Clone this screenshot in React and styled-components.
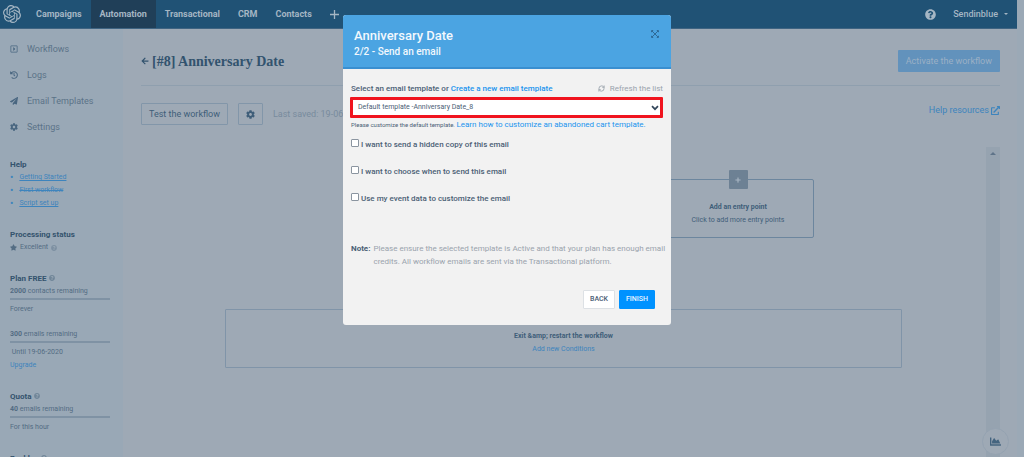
import styled, { createGlobalStyle } from "styled-components";
import {
  FaArrowLeft,
  FaChartArea,
  FaCog,
  FaExternalLinkAlt,
  FaHistory,
  FaPaperPlane,
  FaPlus,
  FaQuestionCircle,
  FaRegCaretSquareRight,
  FaStar,
} from "react-icons/fa";
import { LuRefreshCw } from "react-icons/lu";
import { SiOpenai } from "react-icons/si";

const options = [
  "I want to send a hidden copy of this email",
  "I want to choose when to send this email",
  "Use my event data to customize the email",
];

function Sidebar() {
  return (
    <Side>
      <SideLink href="#workflows">
        <FaRegCaretSquareRight />
        Workflows
      </SideLink>
      <SideLink href="#logs">
        <FaHistory />
        Logs
      </SideLink>
      <SideLink href="#templates">
        <FaPaperPlane />
        Email Templates
      </SideLink>
      <SideLink href="#settings">
        <FaCog />
        Settings
      </SideLink>

      <Section>
        <h2>Help</h2>
        <ul>
          <li>
            <HelpLink href="#start">Getting Started</HelpLink>
          </li>
          <li>
            <HelpLink href="#first" $done>
              First workflow
            </HelpLink>
          </li>
          <li>
            <HelpLink href="#script">Script set up</HelpLink>
          </li>
        </ul>
      </Section>
      <Section>
        <h2>Processing status</h2>
        <Status>
          <FaStar size={7} />
          Excellent <FaQuestionCircle size={6} opacity={0.4} />
        </Status>
      </Section>
      <Section>
        <h2>
          Plan FREE <FaQuestionCircle size={6} opacity={0.4} />
        </h2>
        <Usage>
          <b>2000</b> contacts remaining
        </Usage>
        <p>Forever</p>
        <Gap />
        <Usage>
          <b>300</b> emails remaining
        </Usage>
        <p>&nbsp;Until 19-06-2020</p>
        <a href="#upgrade">Upgrade</a>
      </Section>
      <Section>
        <h2>
          Quota <FaQuestionCircle size={6} opacity={0.4} />
        </h2>
        <Usage>
          <b>40</b> emails remaining
        </Usage>
        <p>For this hour</p>
      </Section>
      <Section>
        <h2>
          Backlog <FaQuestionCircle size={6} opacity={0.4} />
        </h2>
      </Section>
    </Side>
  );
}

function EmailModal() {
  return (
    <Overlay>
      <Modal role="dialog" aria-label="Anniversary Date">
        <ModalHeader>
          <div>
            <h2>Anniversary Date</h2>
            <p>2/2 - Send an email</p>
          </div>
          <CloseButton aria-label="Close">
            <svg width="8" height="8" viewBox="0 0 8 8" fill="none" stroke="currentColor">
              <path d="M1 1l6 6M7 1L1 7M.5 2.2V.5h1.7M5.8.5h1.7v1.7M7.5 5.8v1.7H5.8M2.2 7.5H.5V5.8" />
            </svg>
          </CloseButton>
        </ModalHeader>
        <ModalBody>
          <LabelRow>
            <label htmlFor="template">
              Select an email template or <a href="#new">Create a new email template</a>
            </label>
            <RefreshButton>
              <LuRefreshCw size={7} strokeWidth={3} />
              Refresh the list
            </RefreshButton>
          </LabelRow>
          <SelectBox>
            <select id="template">
              <option>Default template -Anniversary Date_8</option>
            </select>
            <svg width="8" height="6" viewBox="0 0 8 6" fill="none" stroke="#33475b" strokeWidth="1.7">
              <path d="M1 1.2l3 3 3-3" />
            </svg>
          </SelectBox>
          <Hint>
            Please customize the default template.{" "}
            <a href="#learn">Learn how to customize an abandoned cart template.</a>
          </Hint>
          <Options>
            {options.map((text) => (
              <label key={text}>
                <input type="checkbox" />
                {text}
              </label>
            ))}
          </Options>
          <Note>
            <b>Note:</b>
            <p>
              Please ensure the selected template is Active and that your plan has enough email
              credits. All workflow emails are sent via the Transactional platform.
            </p>
          </Note>
          <Actions>
            <ActionButton>BACK</ActionButton>
            <ActionButton $primary>FINISH</ActionButton>
          </Actions>
        </ModalBody>
      </Modal>
    </Overlay>
  );
}

export default function App() {
  return (
    <>
      <GlobalStyle />
      <Page>
        <Nav>
          <Brand href="#home" aria-label="Home">
            <SiOpenai size={18} />
          </Brand>
          <NavLink href="#campaigns">Campaigns</NavLink>
          <NavLink href="#automation" $active>
            Automation
          </NavLink>
          <NavLink href="#transactional">Transactional</NavLink>
          <NavLink href="#crm">CRM</NavLink>
          <NavLink href="#contacts">Contacts</NavLink>
          <NavLink href="#more" aria-label="More">
            <svg width="9" height="9" viewBox="0 0 9 9" stroke="currentColor" strokeWidth="1.3">
              <path d="M4.5 0v9M0 4.5h9" />
            </svg>
          </NavLink>
          <Account>
            <FaQuestionCircle size={11} />
            <AccountButton>
              Sendinblue
              <svg width="4" height="2" viewBox="0 0 4 2" fill="currentColor">
                <path d="M0 0h4L2 2z" />
              </svg>
            </AccountButton>
          </Account>
        </Nav>
        <Content>
          <Sidebar />
          <Main>
            <TitleRow>
              <h1>
                <FaArrowLeft size={8} />
                [#8] Anniversary Date
              </h1>
              <ActivateButton>Activate the workflow</ActivateButton>
            </TitleRow>
            <Toolbar>
              <ToolButton>Test the workflow</ToolButton>
              <ToolButton aria-label="Workflow settings">
                <FaCog size={9} />
              </ToolButton>
              <span>Last saved: 19-06-2020</span>
              <HelpResources href="#resources">
                Help resources
                <FaExternalLinkAlt size={9} />
              </HelpResources>
            </Toolbar>
            <Workspace>
              <Canvas>
                <EntryPoint>
                  <PlusBadge>
                    <FaPlus size={6} />
                  </PlusBadge>
                  <b>Add an entry point</b>
                  <span>Click to add more entry points</span>
                </EntryPoint>
                <ExitBox>
                  <b>Exit &amp;amp; restart the workflow</b>
                  <a href="#conditions">Add new Conditions</a>
                </ExitBox>
              </Canvas>
              <ScrollTrack>
                <svg width="6" height="3" viewBox="0 0 6 3" fill="#5f7489">
                  <path d="M3 0l3 3H0z" />
                </svg>
              </ScrollTrack>
            </Workspace>
          </Main>
        </Content>
        <StatsButton aria-label="Statistics">
          <FaChartArea size={11} />
        </StatsButton>
      </Page>
      <EmailModal />
    </>
  );
}

const GlobalStyle = createGlobalStyle`
  * {
    box-sizing: border-box;
    margin: 0;
    padding: 0;
  }
  body {
    background: #9ba9b6;
    color: #3f5e79;
    font-family: Roboto, sans-serif;
    font-size: 7px;
    line-height: 13px;
    overflow: hidden;
  }
  a {
    color: #3d84bd;
    text-decoration: none;
  }
  button,
  select {
    font: inherit;
    color: inherit;
    background: none;
    border: none;
  }
  svg {
    flex-shrink: 0;
  }
`;

const Page = styled.div`
  display: flex;
  flex-direction: column;
  height: 100vh;
  padding-right: 7px;
`;

const Nav = styled.nav`
  display: flex;
  flex-shrink: 0;
  height: 29px;
  background: #205275;
  border-bottom: 1px solid #3f6482;
  color: #a5b6c4;
  font-size: 9px;
  font-weight: 700;
`;

const Brand = styled.a`
  display: flex;
  align-items: center;
  padding: 0 6px 0 3px;
  color: #a5b6c4;
`;

const NavLink = styled.a`
  display: flex;
  align-items: center;
  padding: 0 9px;
  color: #a5b6c4;
  background: ${(props) => (props.$active ? "#203f58" : "none")};
`;

const Account = styled.div`
  display: flex;
  align-items: center;
  gap: 17px;
  margin-left: auto;
  padding-right: 9px;
`;

const AccountButton = styled.button`
  display: flex;
  align-items: center;
  gap: 6px;
  font-weight: 500;
`;

const Content = styled.div`
  display: flex;
  flex: 1;
  min-height: 0;
`;

const Side = styled.aside`
  width: 123px;
  flex-shrink: 0;
  padding: 7px 13px 0 10px;
  background: #99a8b6;
  overflow: hidden;
`;

const SideLink = styled.a`
  display: flex;
  align-items: center;
  gap: 9px;
  height: 26px;
  color: #5b7388;
  font-size: 9px;
  > svg {
    width: 8px;
    height: 8px;
    color: #496680;
  }
`;

const Section = styled.section`
  margin-top: 18px;
  color: #536c83;
  h2 {
    color: #34536d;
    font-size: 8px;
    font-weight: 700;
  }
  ul {
    list-style: none;
  }
  li {
    display: flex;
    gap: 6px;
  }
  li::before {
    content: "•";
    color: #3d84bd;
    font-size: 10px;
  }
`;

const HelpLink = styled.a`
  text-decoration: ${(props) => (props.$done ? "line-through" : "underline")};
`;

const Status = styled.p`
  display: flex;
  align-items: center;
  gap: 3px;
`;

const Usage = styled.p`
  margin-bottom: 3px;
  border-bottom: 2px solid #7f92a4;
`;

const Gap = styled.div`
  height: 12px;
`;

const Main = styled.main`
  display: flex;
  flex: 1;
  flex-direction: column;
  min-width: 0;
  padding: 0 17px 0 18px;
  background: #9ea9b5;
`;

const TitleRow = styled.div`
  display: flex;
  align-items: center;
  justify-content: space-between;
  height: 57px;
  padding-top: 8px;
  border-bottom: 1px solid #8f9fae;
  h1 {
    display: flex;
    align-items: center;
    gap: 3px;
    color: #32536e;
    font-family: "Liberation Serif", serif;
    font-size: 14px;
  }
`;

const ActivateButton = styled.button`
  height: 22px;
  padding: 0 8px;
  border-radius: 1px;
  background: #6292bc;
  color: #9bb0c5;
  font-size: 9px;
`;

const Toolbar = styled.div`
  display: flex;
  align-items: center;
  gap: 10px;
  padding-top: 17px;
  color: #788b9d;
  font-size: 9px;
`;

const ToolButton = styled.button`
  display: flex;
  align-items: center;
  height: 22px;
  padding: 0 7px;
  border: 1px solid #8296a9;
  border-radius: 1px;
  color: #3f5e79;
`;

const HelpResources = styled.a`
  display: flex;
  align-items: center;
  gap: 2px;
  margin-left: auto;
  padding-bottom: 8px;
`;

const Workspace = styled.div`
  display: flex;
  flex: 1;
  margin-top: 22px;
`;

const Canvas = styled.div`
  display: flex;
  flex: 1;
  flex-direction: column;
  padding: 32px 84px 0;
`;

const EntryPoint = styled.div`
  position: relative;
  display: flex;
  flex-direction: column;
  align-items: center;
  align-self: flex-end;
  width: 152px;
  height: 59px;
  margin-right: 88px;
  padding-top: 21px;
  border: 1px solid #6c869e;
  border-radius: 2px;
`;

const PlusBadge = styled.span`
  position: absolute;
  top: -10px;
  display: grid;
  place-items: center;
  width: 19px;
  height: 19px;
  border-radius: 1px;
  background: #6d8194;
  color: #a9b6c3;
`;

const ExitBox = styled.div`
  display: flex;
  flex-direction: column;
  align-items: center;
  padding: 20px 0 11px;
  margin-top: 71px;
  border: 1px solid #8094a8;
  border-radius: 1px;
`;

const ScrollTrack = styled.div`
  display: flex;
  justify-content: center;
  width: 14px;
  padding-top: 5px;
  background: #96a3b0;
`;

const StatsButton = styled.button`
  position: fixed;
  right: 15px;
  bottom: 2px;
  display: grid;
  place-items: center;
  width: 27px;
  height: 27px;
  border: 1px solid #94a2b0;
  border-radius: 50%;
  background: #9ea9b5;
  color: #44647f;
`;

const Overlay = styled.div`
  position: fixed;
  inset: 0;
  display: flex;
  align-items: flex-start;
  justify-content: center;
  padding: 15px 10px 0 0;
`;

const Modal = styled.div`
  width: 328px;
  border-radius: 3px;
  background: #f2f2f2;
  color: #4b6075;
  overflow: hidden;
  a {
    color: #1b94ee;
  }
`;

const ModalHeader = styled.header`
  display: flex;
  align-items: flex-start;
  justify-content: space-between;
  height: 54px;
  padding: 12px 12px 0 11px;
  border-bottom: 2px solid #3a8fd0;
  background: #4ba4e2;
  color: #f2f8fd;
  h2 {
    font-size: 13px;
    font-weight: 500;
    line-height: 17px;
  }
  p {
    font-size: 10px;
    font-weight: 500;
    line-height: 15px;
  }
`;

const CloseButton = styled.button`
  display: flex;
  padding-top: 3px;
  color: #2f6a98;
`;

const ModalBody = styled.div`
  padding: 13px 8px 16px;
`;

const LabelRow = styled.div`
  display: flex;
  justify-content: space-between;
  font-size: 8px;
  font-weight: 500;
`;

const RefreshButton = styled.button`
  display: flex;
  align-items: center;
  gap: 5px;
  color: #9aa3ad;
  font-weight: 400;
`;

const SelectBox = styled.div`
  display: flex;
  align-items: center;
  height: 21px;
  margin: 2px 0 0 -1px;
  padding-right: 1px;
  border: 3px solid #f0141e;
  border-radius: 1px;
  background: #fff;
  select {
    flex: 1;
    padding-left: 5px;
    appearance: none;
    outline: none;
  }
`;

const Hint = styled.p`
  font-size: 6px;
  white-space: nowrap;
  a {
    font-size: 8px;
  }
`;

const Options = styled.div`
  display: grid;
  gap: 14px;
  margin-top: 7px;
  font-size: 8px;
  font-weight: 500;
  label {
    display: flex;
    align-items: flex-start;
    gap: 2px;
  }
  input {
    width: 8px;
    height: 8px;
    margin-top: 1px;
    appearance: none;
    border: 1px solid #8b95a0;
    border-radius: 1px;
    background: #fff;
  }
`;

const Note = styled.div`
  display: flex;
  gap: 3px;
  margin: 37px -6px 0 0;
  font-size: 8px;
  p {
    color: #9aa3ad;
  }
`;

const Actions = styled.div`
  display: flex;
  justify-content: flex-end;
  gap: 4px;
  margin-top: 22px;
  padding-right: 8px;
`;

const ActionButton = styled.button`
  height: 19px;
  padding: 0 6px;
  border: 1px solid ${(props) => (props.$primary ? "#0092ff" : "#dde1e5")};
  border-radius: 1px;
  background: ${(props) => (props.$primary ? "#0092ff" : "#fff")};
  color: ${(props) => (props.$primary ? "#e8f4ff" : "#4b6075")};
  font-weight: 500;
`;
